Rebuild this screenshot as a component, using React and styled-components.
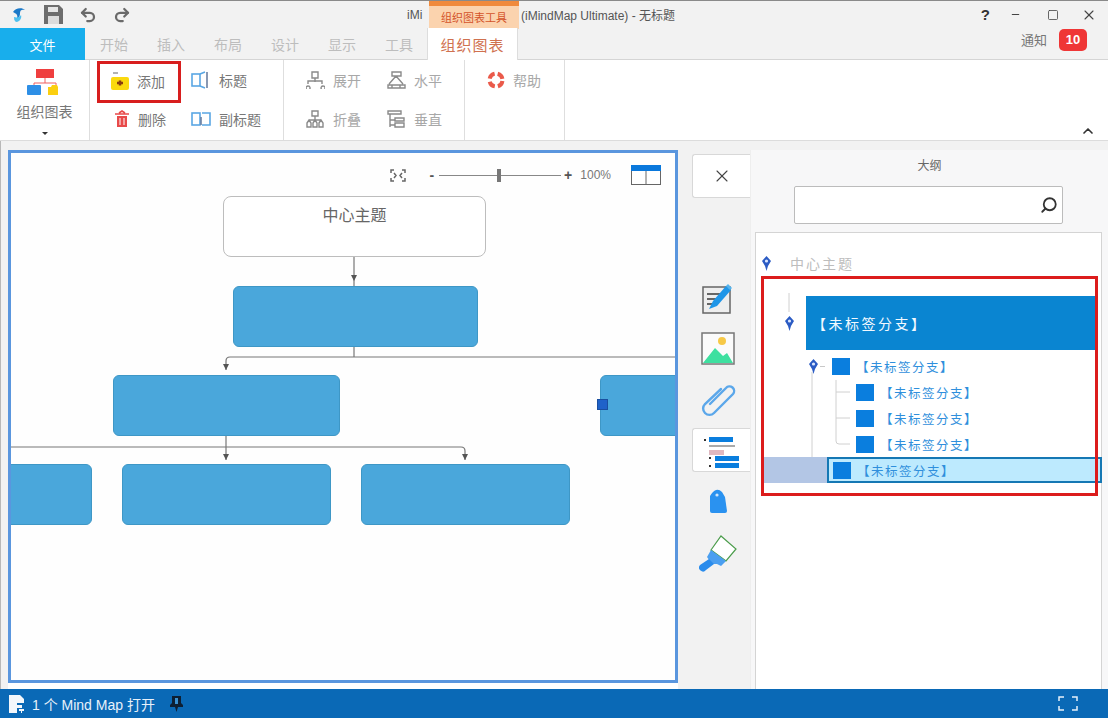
import React from 'react'
import styled, { createGlobalStyle } from 'styled-components'
import { Undo2, Redo2, X, Minus, Square, ChevronUp, Search } from 'lucide-react'

const GlobalStyle = createGlobalStyle`
  html, body { margin: 0; padding: 0; background: #f2f2f2; }
  * { box-sizing: border-box; }
`
const Page = styled.div`
  width: 1108px;
  height: 718px;
  display: flex;
  flex-direction: column;
  overflow: hidden;
  background: #f2f2f2;
  font-family: "Noto Sans CJK SC", "Noto Sans", sans-serif;
  color: #777;
  font-size: 13px;
`
const TitleBar = styled.div`
  height: 28px;
  flex: none;
  display: flex;
  align-items: center;
  border-top: 1px solid #8a8a8a;
  background: #f2f2f2;
`
const QuickAccess = styled.div`
  width: 407px;
  flex: none;
  display: flex;
  align-items: center;
  padding-left: 11px;
`
const QuickButton = styled.span`
  display: flex;
  margin-left: ${({ gap }) => gap}px;
  color: #6a6a6a;
`
const TitleText = styled.span`
  font-size: 12px;
  color: #555;
  white-space: nowrap;
  font-family: "Liberation Sans", "Noto Sans CJK SC", sans-serif;
`
const TitleLead = styled(TitleText)`
  width: 20px;
`
const ToolTab = styled.div`
  width: 90px;
  height: 28px;
  margin: 0 2px;
  flex: none;
  display: flex;
  align-items: center;
  justify-content: center;
  font-size: 11px;
  color: #d4532a;
  border-top: 5px solid #f08a3c;
  background: #fbd3ae;
`
const WindowControls = styled.div`
  margin-left: auto;
  display: flex;
  align-items: center;
  padding-right: 11px;
  color: #444;
`
const Help = styled.span`
  font: bold 15px "Liberation Sans", sans-serif;
  color: #333;
  margin-right: 20px;
`
const ControlSlot = styled.span`
  display: flex;
  margin-left: ${({ gap }) => gap}px;
`
const TabRow = styled.div`
  height: 32px;
  flex: none;
  display: flex;
  align-items: stretch;
  border-bottom: 1px solid #d5d5d5;
`
const FileTab = styled.div`
  width: 85px;
  display: flex;
  align-items: center;
  justify-content: center;
  color: #fff;
  font-size: 13px;
  background: #18aeec;
  margin-bottom: -1px;
`
const TabList = styled.div`
  display: flex;
  width: 342px;
  padding-left: 15px;
  gap: 29px;
  align-items: center;
`
const Tab = styled.span`
  color: #bdbdbd;
  font-size: 14px;
  white-space: nowrap;
`
const ActiveTab = styled.div`
  width: 91px;
  display: flex;
  align-items: center;
  justify-content: center;
  color: #d0714f;
  font-size: 15px;
  letter-spacing: 1px;
  background: #fff;
  border-left: 1px solid #ddd;
  border-right: 1px solid #ddd;
  margin-bottom: -1px;
`
const Notice = styled.div`
  margin-left: auto;
  display: flex;
  align-items: center;
  gap: 12px;
  padding: 0 21px 8px 0;
  color: #777;
`
const Badge = styled.span`
  width: 28px;
  height: 22px;
  border-radius: 5px;
  background: #ef3636;
  color: #fff;
  font: bold 13px "Liberation Sans", sans-serif;
  display: flex;
  align-items: center;
  justify-content: center;
`
const Ribbon = styled.div`
  height: 81px;
  flex: none;
  display: flex;
  background: #fff;
  border-bottom: 1px solid #dcdcdc;
  position: relative;
`
const RibbonGroup = styled.div`
  width: ${({ w }) => w}px;
  flex: none;
  border-right: 1px solid #dedede;
  display: grid;
  grid-template-columns: ${({ cols }) => cols || '1fr'};
  grid-template-rows: 39px 40px;
  padding-left: ${({ pad }) => pad || 0}px;
`
const BigGroup = styled.div`
  width: 90px;
  flex: none;
  border-right: 1px solid #dedede;
  display: flex;
  flex-direction: column;
  align-items: center;
  padding-top: 9px;
  color: #777;
`
const BigLabel = styled.span`
  font-size: 14px;
  margin-top: 6px;
  line-height: 18px;
`
const Caret = styled.span`
  width: 0;
  height: 0;
  margin-top: 12px;
  border-left: 3px solid transparent;
  border-right: 3px solid transparent;
  border-top: 3px solid #333;
`
const RibbonButton = styled.div`
  display: flex;
  align-items: center;
  gap: 8px;
  height: 39px;
  padding-left: ${({ lead }) => lead || 0}px;
  color: ${({ $dim }) => ($dim ? '#a8a8a8' : '#777')};
  font-size: 14px;
  white-space: nowrap;
`
const MarkedButton = styled(RibbonButton)`
  height: 42px;
  width: 84px;
  margin: 1px 0 0 -4px;
  padding: 0 0 2px 11px;
  border: 3px solid #d81e1e;
`
const CollapseSlot = styled.span`
  position: absolute;
  right: 12px;
  bottom: 1px;
  color: #333;
  display: flex;
`
const Main = styled.div`
  flex: 1;
  min-height: 0;
  display: flex;
  padding-top: 9px;
  border-left: 1px solid #b8b8b8;
`
const CanvasFrame = styled.div`
  width: 670px;
  height: 533px;
  margin-left: 7px;
  flex: none;
  position: relative;
  overflow: hidden;
  background: #fefefe;
  border: 3px solid #5a96de;
  box-shadow: 0 6px 0 #fff;
`
const ZoomBar = styled.div`
  position: absolute;
  top: 12px;
  right: 14px;
  display: flex;
  align-items: center;
  color: #666;
  z-index: 2;
`
const SliderTrack = styled.div`
  width: 122px;
  height: 1px;
  margin: 0 3px 0 5px;
  background: #888;
  position: relative;
`
const SliderThumb = styled.span`
  position: absolute;
  left: 58px;
  top: -6px;
  width: 4px;
  height: 13px;
  background: #777;
`
const ZoomSign = styled.span`
  font: bold 14px "Liberation Sans", sans-serif;
  color: #555;
  line-height: 14px;
  margin-left: ${({ lead }) => lead || 0}px;
`
const ZoomText = styled.span`
  font: 12px "Liberation Sans", sans-serif;
  color: #777;
  margin: 0 20px 0 8px;
`
const Node = styled.div`
  position: absolute;
  left: ${({ x }) => x}px;
  top: ${({ y }) => y}px;
  width: ${({ w }) => w}px;
  height: 61px;
  border-radius: 6px;
  background: #4aa7db;
  border: 1px solid #3e97c6;
`
const RootNode = styled(Node)`
  background: #fff;
  border: 1px solid #bdbdbd;
  border-radius: 8px;
  text-align: center;
  font-size: 16px;
  line-height: 35px;
  color: #666;
`
const Handle = styled.span`
  position: absolute;
  left: 586px;
  top: 246px;
  width: 11px;
  height: 11px;
  background: #1f62c9;
  border: 1px solid #1a4fa0;
`
const Wires = styled.svg`
  position: absolute;
  left: 0;
  top: 0;
`
const Rail = styled.div`
  width: 72px;
  flex: none;
  display: flex;
  flex-direction: column;
  align-items: flex-start;
  padding-left: 14px;
`
const RailTab = styled.div`
  width: 58px;
  height: ${({ h }) => h}px;
  margin-top: ${({ top }) => top || 0}px;
  display: flex;
  align-items: center;
  justify-content: center;
  background: #fff;
  border: 1px solid #d8d8d8;
  border-right: none;
  border-radius: 3px 0 0 3px;
`
const RailIcon = styled.div`
  width: 52px;
  margin-top: ${({ top }) => top}px;
  display: flex;
  justify-content: center;
`
const Outline = styled.div`
  flex: 1;
  min-width: 0;
  display: flex;
  flex-direction: column;
  align-items: center;
  background: #f7f7f8;
  border-left: 1px solid #eee;
`
const OutlineTitle = styled.div`
  height: 36px;
  display: flex;
  align-items: center;
  font-size: 12px;
  color: #666;
  padding-bottom: 8px;
`
const SearchBox = styled.div`
  width: 269px;
  height: 38px;
  margin-right: 2px;
  background: #fff;
  border: 1px solid #bcbcbc;
  border-radius: 2px;
  display: flex;
  align-items: center;
  justify-content: flex-end;
  padding-right: 4px;
  color: #333;
`
const MirroredSearch = styled(Search)`
  transform: scaleX(-1);
`
const TreePanel = styled.div`
  width: 347px;
  margin: 8px 7px 0 5px;
  height: 457px;
  flex: none;
  background: #fff;
  border: 1px solid #d4d4d4;
  border-bottom: none;
  position: relative;
  padding-top: 17px;
`
const TreeRoot = styled.div`
  height: 26px;
  display: flex;
  align-items: center;
  padding-left: 6px;
  gap: 19px;
  color: #bdbdbd;
  font-size: 14px;
  letter-spacing: 2px;
`
const BranchRow = styled.div`
  height: 54px;
  margin: 20px 4px 3px 0;
  padding-left: 29px;
  display: flex;
  align-items: center;
  gap: 12px;
`
const MainBranch = styled.div`
  flex: 1;
  height: 54px;
  display: flex;
  align-items: center;
  padding-left: 6px;
  background: #0a85d1;
  color: #f2f9ff;
  font-size: 14px;
  letter-spacing: 2.5px;
`
const TreeRow = styled.div`
  height: 26px;
  display: flex;
  align-items: center;
  gap: 6px;
  padding-left: ${({ indent }) => indent}px;
  color: #2f8fdc;
  font-size: 12.5px;
  letter-spacing: 1.5px;
  position: relative;
  z-index: 1;
`
const PinSlot = styled.span`
  width: 17px;
  display: flex;
  align-items: center;
  gap: 2px;
  &::after {
    content: "";
    width: 5px;
    height: 1px;
    background: #c8c8c8;
  }
`
const Bullet = styled.span`
  width: 18px;
  height: 17px;
  flex: none;
  background: #0a7ede;
`
const SelectedRow = styled.div`
  height: 26px;
  margin-left: 8px;
  margin-right: -1px;
  display: flex;
  background: #b3c6e5;
  position: relative;
  z-index: 1;
`
const SelectedBody = styled.div`
  flex: 1;
  margin-left: 63px;
  display: flex;
  align-items: center;
  gap: 6px;
  padding-left: 4px;
  background: #bdeafe;
  border: 2px solid #1578b4;
  color: #2f8fdc;
  font-size: 12.5px;
  letter-spacing: 1.5px;
`
const RedFrame = styled.div`
  position: absolute;
  left: 5px;
  top: 43px;
  width: 337px;
  height: 220px;
  border: 3px solid #dc1c1c;
  z-index: 3;
  pointer-events: none;
`
const Status = styled.div`
  height: 29px;
  flex: none;
  display: flex;
  align-items: center;
  background: #0a69b6;
  color: #e8f1fa;
  padding: 0 30px 0 9px;
  font-size: 14px;
  font-family: "Liberation Sans", "Noto Sans CJK SC", sans-serif;
`
const StatusText = styled.span`
  margin: 0 15px 0 6px;
`
const StatusEnd = styled.span`
  margin-left: auto;
  display: flex;
`
const TreeLines = styled.svg`
  position: absolute;
  left: 0;
  top: 0;
`

const Logo = () => (
  <svg width="15" height="16" viewBox="0 0 15 16">
    <path d="M2 5c2-4 9-5 12-2-3-1-5 0-5 3 0 4-2 7-6 7 3-1 4-3 3-5-1-2-3-2-4-3z" fill="#1a78c8" />
    <path d="M3 10c3 1 6 0 7-2 1 3-1 6-4 7-2 0-3-2-3-5z" fill="#4fc0ee" />
  </svg>
)
const Save = () => (
  <svg width="19" height="19" viewBox="0 0 19 19">
    <path d="M0 0h15l4 4v15H0z" fill="#6d6d6d" />
    <rect x="4" y="2" width="10" height="5" fill="#e5e5e5" />
    <rect x="4" y="11" width="11" height="8" fill="#dcdcdc" />
  </svg>
)
const OrgIcon = () => (
  <svg width="36" height="27" viewBox="0 0 36 27">
    <rect x="9" y="0" width="18" height="9" fill="#ef3f3f" />
    <path d="M18 9v5M7 18v-4h22v4" stroke="#ef6060" fill="none" />
    <rect x="0" y="16" width="14" height="10" rx="1" fill="#2e8fe6" />
    <path d="M21 18h3l1-2h5l1 2v8H21z" fill="#fbcf10" />
  </svg>
)
const FolderAdd = () => (
  <svg width="18" height="18" viewBox="0 0 18 18">
    <path d="M2 1h5" stroke="#666" fill="none" />
    <path d="M0 7q0-2 2-2h14q2 0 2 2v9q0 2-2 2H2q-2 0-2-2z" fill="#fbd90e" />
    <path d="M6 11h6M9 8.500v5" stroke="#8a3b10" strokeWidth="2.500" />
  </svg>
)
const TitleIcon = ({ second }) => (
  <svg width="20" height="18" viewBox="0 0 20 18" fill="none">
    <rect x="1" y="3" width="8" height="12" stroke="#5aa7e4" strokeWidth="1.600" />
    <path d={second ? 'M11 3h8v12h-8' : 'M9 3l5-2M9 15l5 2'} stroke="#5aa7e4" strokeWidth="1.600" />
    <path d={second ? 'M10 7v8' : 'M16 1v16'} stroke="#6b7fa0" strokeWidth="1.600" />
  </svg>
)
const Trash = () => (
  <svg width="16" height="18" viewBox="0 0 16 18">
    <path d="M1 4h14M5 3l3-2 3 2" stroke="#e84a4a" strokeWidth="1.600" fill="none" />
    <path d="M3 6h10v11H3z" fill="#e84a4a" />
    <path d="M6 8v7M10 8v7" stroke="#fff" />
  </svg>
)
const Tree = ({ v }) => (
  <svg width="19" height="18" viewBox="0 0 19 18" fill="none" stroke="#8a8a8a" strokeWidth="1.400">
    {v === 0 && <path d="M6 1h6v6H6zM9 7v4M2 15a2 2 0 1 0 .1 0M2 13V10h14v3M17 15a2 2 0 1 0 .1 0" />}
    {v === 1 && <path d="M5 1h9v4H5zM9 5l-7 8M9 5l7 8M1 14h17v3H1zM5 14v3M13 14v3" />}
    {v === 2 && <path d="M6 1h6v5H6zM9 6v4M3 10h12M1 13l2-3 2 3v4H1zM7 13l2-3 2 3v4H7zM13 13l2-3 2 3v4h-4z" />}
    {v === 3 && <path d="M1 1h13v3H1zM3 4v13M8 8h9v3H8zM8 13h9v4H8zM3 10h5M3 15h5" />}
  </svg>
)
const Lifebuoy = () => (
  <svg width="18" height="18" viewBox="0 0 18 18" fill="none">
    <circle cx="9" cy="9" r="6.500" stroke="#ea5a4a" strokeWidth="4" strokeDasharray="7 3.200" strokeDashoffset="-1" />
  </svg>
)
const Wiring = () => (
  <Wires width="664" height="528" viewBox="0 0 664 528" fill="none">
    <path d="M343 103v30M343 193v11M215 217v-9q0-4 4-4h446M215 282v25M454 307v-9q0-4-4-4H0" stroke="#777" strokeWidth="1.200" />
    <path d="M340 122h6l-3 6zM212 211h6l-3 6zM212 301h6l-3 6zM451 301h6l-3 6z" fill="#555" />
  </Wires>
)
const LayoutIcon = () => (
  <svg width="30" height="20" viewBox="0 0 30 20">
    <rect x="0.500" y="0.500" width="29" height="19" fill="#fff" stroke="#666" />
    <rect x="0" y="0" width="30" height="6" fill="#0a78dc" />
    <path d="M15 6v14" stroke="#666" />
  </svg>
)
const FitIcon = () => (
  <svg width="16" height="13" viewBox="0 0 16 13" fill="none" stroke="#666" strokeWidth="1.500">
    <path d="M1 4V1h3M12 1h3v3M15 9v3h-3M4 12H1V9M4 4l2 2.500L4 9M12 4l-2 2.500L12 9" />
  </svg>
)
const EditIcon = () => (
  <svg width="32" height="31" viewBox="0 0 32 31">
    <rect x="1" y="4" width="27" height="26" fill="#eee" stroke="#666" strokeWidth="1.500" />
    <path d="M5 11h14M5 16h10M5 21h8" stroke="#666" strokeWidth="2" />
    <path d="M7 26l4-8L24 3l5 4-14 16z" fill="#1f96e8" />
    <path d="M24 3l2-2 4 4-2 2z" fill="#55b4ee" />
  </svg>
)
const ImageIcon = () => (
  <svg width="34" height="33" viewBox="0 0 34 33">
    <rect x="1" y="1" width="32" height="31" fill="#fbfbfb" stroke="#777" strokeWidth="1.500" />
    <circle cx="21" cy="9" r="4" fill="#f7c948" />
    <path d="M2 31l12-15 8 8 4-3 6 10z" fill="#3ee0a0" />
  </svg>
)
const ClipIcon = () => (
  <svg width="35" height="34" viewBox="0 0 35 34" fill="none" stroke="#5ba7ea" strokeWidth="2.400" strokeLinecap="round">
    <path d="M9 21L25 5a4.500 4.500 0 0 1 7 6L13 30a6 6 0 0 1-9-9L20 6" />
  </svg>
)
const ListIcon = () => (
  <svg width="36" height="36" viewBox="0 0 36 36">
    <rect x="0" y="7" width="2" height="2" fill="#333" />
    <rect x="5" y="5" width="24" height="5" fill="#0a7ede" />
    <path d="M5 14h26" stroke="#aaa" strokeWidth="2" />
    <rect x="5" y="18" width="15" height="5" fill="#dfb8c0" />
    <rect x="5" y="25" width="2" height="2" fill="#333" />
    <rect x="11" y="24" width="24" height="5" fill="#0a7ede" />
    <rect x="5" y="33" width="2" height="2" fill="#333" />
    <rect x="11" y="31" width="24" height="5" fill="#0a7ede" />
  </svg>
)
const TagIcon = () => (
  <svg width="20" height="26" viewBox="0 0 20 26">
    <path d="M2 7q3-5 6-6 3-1 6 2l3 5 2 14q0 2-2 2L4 24q-2 0-2-2z" fill="#2a92f0" />
    <circle cx="9" cy="6" r="1.600" fill="#cfe6fb" />
  </svg>
)
const BrushIcon = () => (
  <svg width="38" height="38" viewBox="0 0 38 38">
    <path d="M22 1L37 14 27 26 12 15z" fill="#fff" stroke="#4a9c4a" strokeWidth="1.200" />
    <path d="M12 15l15 11-5 5-4-2-5 0-5-7z" fill="#4b9ff0" />
    <path d="M10 24l5 5-8 6a3.500 3.500 0 0 1-6-5z" fill="#2a8cec" />
  </svg>
)
const Pin = () => (
  <svg width="9" height="15" viewBox="0 0 9 15">
    <path d="M4.500 0L9 5 6 10 4.500 15 3 10 0 5z" fill="#2b5bc4" />
    <circle cx="4.500" cy="5" r="1.600" fill="#dbe7ff" />
  </svg>
)
const Connectors = () => (
  <TreeLines width="345" height="300" viewBox="0 0 345 300" fill="none" stroke="#d0d0d0">
    <path d="M33 60v19M56 139v86M80 147v61q0 3 3 3h11M80 159h14M80 185h14" />
  </TreeLines>
)
const FileDoc = () => (
  <svg width="17" height="18" viewBox="0 0 17 18">
    <path d="M0 0h11l4 4v4H8v10H0z" fill="#f3f7fb" />
    <path d="M3 10h10v3H6v5H3zM10 14h5v2h-2v2h-1v-2h-2z" fill="#f3f7fb" />
  </svg>
)
const PinDown = () => (
  <svg width="13" height="16" viewBox="0 0 13 16">
    <path d="M2 0h9v7l2 2v2H8l-1.500 5L5 11H0V9l2-2z" fill="#0d1f33" />
    <rect x="5" y="2" width="3" height="6" fill="#3a90d0" />
  </svg>
)
const FocusIcon = () => (
  <svg width="20" height="15" viewBox="0 0 20 15" fill="none" stroke="#e8f1fa" strokeWidth="1.500">
    <path d="M1 5V1h5M14 1h5v4M19 10v4h-5M6 14H1v-4" />
  </svg>
)

const App = () => (
  <Page>
    <GlobalStyle />
    <TitleBar>
      <QuickAccess>
        <Logo />
        <QuickButton gap={18}><Save /></QuickButton>
        <QuickButton gap={16}><Undo2 size={18} strokeWidth={3} /></QuickButton>
        <QuickButton gap={16}><Redo2 size={18} strokeWidth={3} /></QuickButton>
      </QuickAccess>
      <TitleLead>iMi</TitleLead>
      <ToolTab>组织图表工具</ToolTab>
      <TitleText>(iMindMap Ultimate) - 无标题</TitleText>
      <WindowControls>
        <Help>?</Help>
        <ControlSlot gap={0}><Minus size={11} strokeWidth={2.5} /></ControlSlot>
        <ControlSlot gap={26}><Square size={12} strokeWidth={1.6} /></ControlSlot>
        <ControlSlot gap={22}><X size={16} strokeWidth={1.6} /></ControlSlot>
      </WindowControls>
    </TitleBar>
    <TabRow>
      <FileTab>文件</FileTab>
      <TabList>
        <Tab>开始</Tab><Tab>插入</Tab><Tab>布局</Tab><Tab>设计</Tab><Tab>显示</Tab><Tab>工具</Tab>
      </TabList>
      <ActiveTab>组织图表</ActiveTab>
      <Notice>通知<Badge>10</Badge></Notice>
    </TabRow>
    <Ribbon>
      <BigGroup>
        <OrgIcon />
        <BigLabel>组织图表</BigLabel>
        <Caret />
      </BigGroup>
      <RibbonGroup w={194} cols="90px 1fr" pad={11}>
        <MarkedButton><FolderAdd />添加</MarkedButton>
        <RibbonButton><TitleIcon />标题</RibbonButton>
        <RibbonButton lead={13}><Trash />删除</RibbonButton>
        <RibbonButton><TitleIcon second />副标题</RibbonButton>
      </RibbonGroup>
      <RibbonGroup w={181} cols="81px 1fr" pad={22}>
        <RibbonButton $dim><Tree v={0} />展开</RibbonButton>
        <RibbonButton $dim><Tree v={1} />水平</RibbonButton>
        <RibbonButton $dim><Tree v={2} />折叠</RibbonButton>
        <RibbonButton $dim><Tree v={3} />垂直</RibbonButton>
      </RibbonGroup>
      <RibbonGroup w={100} pad={22}>
        <RibbonButton $dim><Lifebuoy />帮助</RibbonButton>
      </RibbonGroup>
      <CollapseSlot><ChevronUp size={16} strokeWidth={2.5} /></CollapseSlot>
    </Ribbon>
    <Main>
      <CanvasFrame>
        <ZoomBar>
          <FitIcon />
          <ZoomSign lead={23}>-</ZoomSign>
          <SliderTrack><SliderThumb /></SliderTrack>
          <ZoomSign>+</ZoomSign>
          <ZoomText>100%</ZoomText>
          <LayoutIcon />
        </ZoomBar>
        <Wiring />
        <RootNode x={212} y={43} w={263}>中心主题</RootNode>
        <Node x={222} y={133} w={245} />
        <Node x={102} y={222} w={227} />
        <Node x={589} y={222} w={90} />
        <Handle />
        <Node x={-20} y={311} w={101} />
        <Node x={111} y={311} w={209} />
        <Node x={350} y={311} w={209} />
      </CanvasFrame>
      <Rail>
        <RailTab h={44} top={4}><X size={20} strokeWidth={1.3} color="#444" /></RailTab>
        <RailIcon top={85}><EditIcon /></RailIcon>
        <RailIcon top={18}><ImageIcon /></RailIcon>
        <RailIcon top={18}><ClipIcon /></RailIcon>
        <RailTab h={44} top={11}><ListIcon /></RailTab>
        <RailIcon top={17}><TagIcon /></RailIcon>
        <RailIcon top={20}><BrushIcon /></RailIcon>
      </Rail>
      <Outline>
        <OutlineTitle>大纲</OutlineTitle>
        <SearchBox><MirroredSearch size={18} strokeWidth={2.4} /></SearchBox>
        <TreePanel>
          <Connectors />
          <TreeRoot><Pin />中心主题</TreeRoot>
          <BranchRow>
            <Pin />
            <MainBranch>【未标签分支】</MainBranch>
          </BranchRow>
          <TreeRow indent={53}><PinSlot><Pin /></PinSlot><Bullet />【未标签分支】</TreeRow>
          <TreeRow indent={100}><Bullet />【未标签分支】</TreeRow>
          <TreeRow indent={100}><Bullet />【未标签分支】</TreeRow>
          <TreeRow indent={100}><Bullet />【未标签分支】</TreeRow>
          <SelectedRow>
            <SelectedBody><Bullet />【未标签分支】</SelectedBody>
          </SelectedRow>
          <RedFrame />
        </TreePanel>
      </Outline>
    </Main>
    <Status>
      <FileDoc />
      <StatusText>1 个 Mind Map 打开</StatusText>
      <PinDown />
      <StatusEnd><FocusIcon /></StatusEnd>
    </Status>
  </Page>
)

export default App
